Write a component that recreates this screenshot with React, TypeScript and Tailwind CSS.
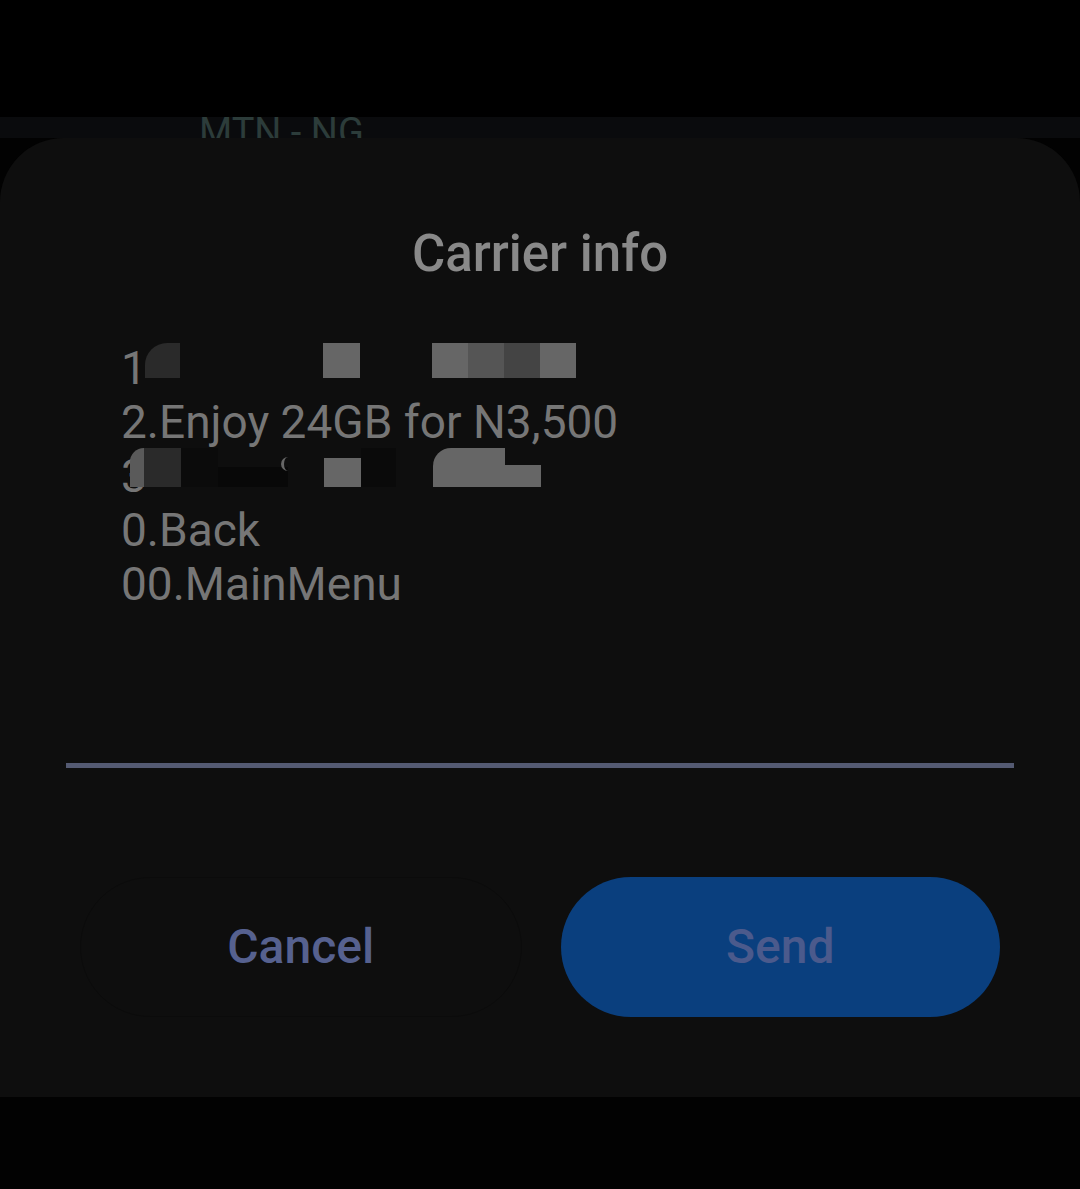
import React from "react";

const font = { fontFamily: "Roboto, 'Noto Sans', sans-serif" };

export default function App() {
  return (
    <div className="w-[1080px] h-[1189px] bg-[#020202] flex flex-col overflow-hidden" style={font}>
      <div className="h-[117px] bg-black shrink-0" />
      <div className="h-[21px] bg-[#0a0b0d] shrink-0 overflow-hidden pl-[199px]">
        <div className="-mt-[7px] text-[38px] leading-[44px] text-[#2c3c3a] whitespace-nowrap">MTN - NG</div>
      </div>
      <div className="h-[959px] shrink-0 bg-[#0e0e0e] rounded-t-[64px] flex flex-col">
        <div className="pt-[86px] text-center text-[51px] leading-[60px] font-medium text-[#898989]">Carrier info</div>
        <div className="mt-[57px] pl-[121px] text-[46px] leading-[54px] text-[#767676]">
          <div className="relative h-[54px]">
            <span>1</span>
            {/* redaction overlay */}
            <div className="absolute inset-x-0 top-[2px] h-[35px] flex pl-[24px]">
              <div className="w-[35px] bg-[#2a2a2a] rounded-tl-[22px]" />
              <div className="w-[143px]" />
              <div className="w-[37px] bg-[#666666]" />
              <div className="w-[72px]" />
              <div className="w-[36px] bg-[#666666]" />
              <div className="w-[36px] bg-[#555555]" />
              <div className="w-[36px] bg-[#444444]" />
              <div className="w-[36px] bg-[#666666]" />
            </div>
          </div>
          <div className="h-[54px] whitespace-nowrap">2.Enjoy 24GB for N3,500</div>
          <div className="relative h-[54px]">
            <span>3</span>
            {/* redaction overlay */}
            <div className="absolute inset-x-0 top-[-1px] h-[39px] flex items-end pl-[9px]">
              <div className="w-[14px] h-full bg-[#5a5a5a] rounded-tl-[14px]" />
              <div className="w-[37px] h-full bg-[#2a2a2a]" />
              <div className="w-[37px] h-full bg-[#0b0b0b]" />
              <div className="w-[63px] h-[20px] bg-[#080808]" />
              <div className="w-[7px] h-[20px] bg-[#080808] flex items-start">
                <div className="w-[7px] h-[14px] border-l-[3px] border-[#666666] rounded-l-full -mt-[10px]" />
              </div>
              <div className="w-[36px]" />
              <div className="w-[37px] h-[29px] bg-[#666666]" />
              <div className="w-[35px] h-full bg-[#0a0a0a]" />
              <div className="w-[37px]" />
              <div className="w-[72px] h-full bg-[#666666] rounded-tl-[18px]" />
              <div className="w-[36px] h-[22px] bg-[#666666]" />
            </div>
          </div>
          <div className="h-[54px]">0.Back</div>
          <div className="h-[54px]">00.MainMenu</div>
        </div>
        <div className="mt-[152px] mx-[66px] h-[5px] bg-[#545a72]" />
        <div className="mt-[109px] px-[80px] flex gap-[39px]">
          <div className="flex-1 h-[140px] rounded-full border border-[#0b0b0b] flex items-center justify-center text-[48px] font-medium text-[#56618f]">
            Cancel
          </div>
          <div className="flex-1 h-[140px] rounded-full bg-[#0a3f7e] flex items-center justify-center text-[48px] font-medium text-[#4b5a8c]">
            Send
          </div>
        </div>
      </div>
      <div className="flex-1 bg-[#020202]" />
    </div>
  );
}
